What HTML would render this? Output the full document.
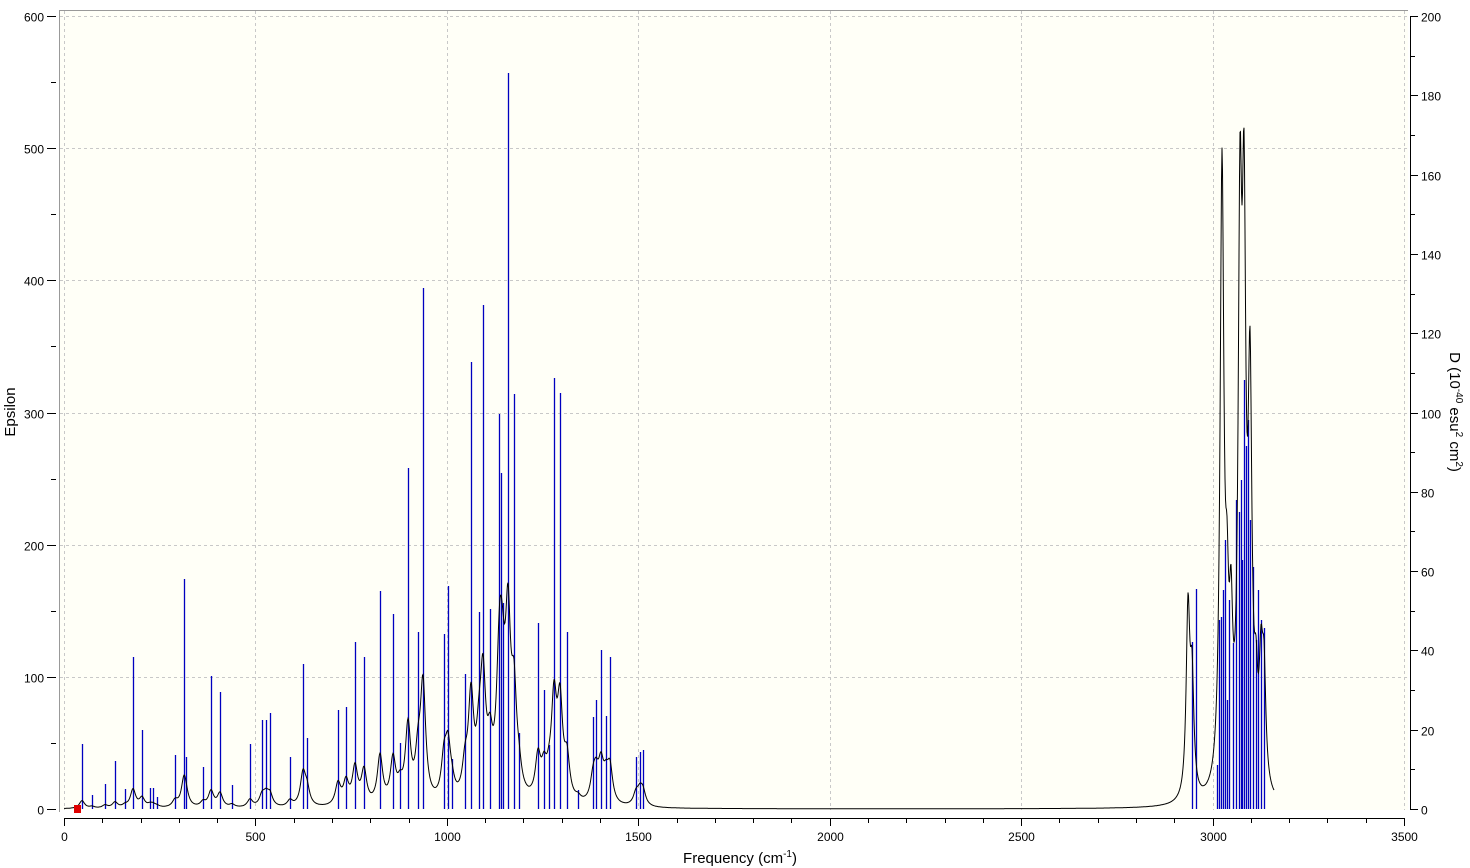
<!DOCTYPE html>
<html><head><meta charset="utf-8"><style>
html,body{margin:0;padding:0;background:#fff;width:1470px;height:868px;overflow:hidden}
svg text{font-family:"Liberation Sans",sans-serif;font-size:12px;fill:#000}
</style></head><body>
<svg id="s" width="1470" height="868" xmlns="http://www.w3.org/2000/svg">
<rect x="60" y="11" width="1348" height="799" fill="#fffff7"/>
<line x1="59.5" y1="11" x2="59.5" y2="812" stroke="#999"/>
<line x1="59" y1="10.5" x2="1408" y2="10.5" stroke="#999"/>
<g id="grid" stroke="#c8c8c8" stroke-dasharray="3,3" stroke-width="1"></g>
<g id="sticks" stroke="#0000c0" stroke-width="1.3"></g>
<path id="curve" fill="none" stroke="#000" stroke-width="1"/>
<rect x="74" y="805" width="7" height="8" fill="#e00000"/>
<g id="axes" stroke="#000" stroke-width="1"></g>
<g id="labels"></g>
<text x="0" y="0" transform="translate(15,412) rotate(-90)" text-anchor="middle" style="font-size:15px">Epsilon</text>
<text transform="translate(1450,412) rotate(90)" text-anchor="middle" style="font-size:15px">D (10<tspan dy="-6" style="font-size:10px">-40</tspan><tspan dy="6"> esu</tspan><tspan dy="-6" style="font-size:10px">2</tspan><tspan dy="6"> cm</tspan><tspan dy="-6" style="font-size:10px">2</tspan><tspan dy="6">)</tspan></text>
<text x="740" y="863" text-anchor="middle" style="font-size:15px">Frequency (cm<tspan dy="-6" style="font-size:10px">-1</tspan><tspan dy="6">)</tspan></text>
</svg>
<script>
var NS="http://www.w3.org/2000/svg";
function el(p,t,a,txt){var e=document.createElementNS(NS,t);for(var k in a)e.setAttribute(k,a[k]);if(txt!==undefined)e.textContent=txt;document.getElementById(p).appendChild(e);return e;}
function X(f){return 64+f*1340/3500;}
function Y(e){return 809-e*793/600;}
for(var f=500;f<3500;f+=500){var x=Math.round(X(f))+0.5;el("grid","line",{x1:x,y1:11,x2:x,y2:810});}
el("grid","line",{x1:1404.5,y1:11,x2:1404.5,y2:810});
for(var e=100;e<=600;e+=100){var y=Math.round(Y(e))+0.5;el("grid","line",{x1:60,y1:y,x2:1408,y2:y});}
el("grid","line",{x1:64.5,y1:11,x2:64.5,y2:810});
el("axes","line",{x1:64,y1:818.5,x2:1405,y2:818.5});
for(var f=0;f<=3500;f+=100){var x=Math.round(X(f))+0.5;var big=f%500==0;el("axes","line",{x1:x,y1:818,x2:x,y2:big?826:823});
 if(big)el("labels","text",{x:x,y:841,"text-anchor":"middle"},""+f);}
for(var e=0;e<=600;e+=100){var y=Math.round(Y(e))+0.5;el("axes","line",{x1:47,y1:y,x2:56,y2:y});el("labels","text",{x:44,y:y+5,"text-anchor":"end"},""+e);}
for(var e=50;e<600;e+=100){var y=Math.round(Y(e))+0.5;el("axes","line",{x1:51,y1:y,x2:56,y2:y});}
el("axes","line",{x1:1410.5,y1:16,x2:1410.5,y2:810});
for(var d=0;d<=200;d+=10){var y=Math.round(809-d*793/200)+0.5;var big=d%20==0;el("axes","line",{x1:1410,y1:y,x2:big?1418:1415,y2:y});
 if(big)el("labels","text",{x:1421,y:y+5},""+d);}
var S=[[82,744],[92,795],[105,784],[115,761],[125,789],[133,657],[142,730],[150,788],[153,788],[157,797],[175,755],[184,579],[186,757],[203,767],[211,676],[220,692],[232,785],[250,744],[262,720],[266,720],[270,713],[290,757],[303,664],[307,738],[338,710],[346,707],[355,642],[364,657],[380,591],[393,614],[400,743],[408,468],[418,632],[423,288],[444,634],[448,586],[452,759],[465,674],[471,362],[479,612],[483,305],[490,609],[499,414],[501,473],[503,603],[508,73],[514,394],[519,733],[538,623],[544,690],[549,745],[554,378],[560,393],[567,632],[578,790],[593,717],[596,700],[601,650],[606,716],[610,657],[636,757],[640,752],[643,750],
[1192,642],[1196,589],[1217,765],[1219,620],[1221,617],[1223,590],[1225,540],[1227,700],[1229,600],[1233,643],[1236,500],[1239,512],[1241,480],[1242,560],[1244,380],[1246,446],[1248,420],[1250,520],[1253,567],[1256,640],[1258,590],[1261,620],[1264,628]];
S.forEach(function(s){el("sticks","line",{x1:s[0]+0.5,y1:s[1],x2:s[0]+0.5,y2:809});});
var P=[];
S.forEach(function(s){if(s[0]<700)P.push([s[0],(809-s[1])*(s[0]<300?0.12:0.22),3.2]);});
var H=[[1188,185,2.2],[1192,110,2.2],[1222,620,2.3],[1227,130,2],[1231,130,2],[1240,520,2.2],[1244,495,2.2],[1250,380,2.3],[1256,70,2],[1261,105,2.2],[1264,105,2.2]];
P=P.concat(H);
var d="";
for(var x=64;x<=1274;x+=0.5){var v=0;for(var i=0;i<P.length;i++){var dx=x-P[i][0],g=P[i][2];v+=P[i][1]*g*g/(dx*dx+g*g);}
 if(v>805)v=805;d+=(d?"L":"M")+x+","+(809-v).toFixed(1);}
document.getElementById("curve").setAttribute("d",d);
</script>
</body></html>
